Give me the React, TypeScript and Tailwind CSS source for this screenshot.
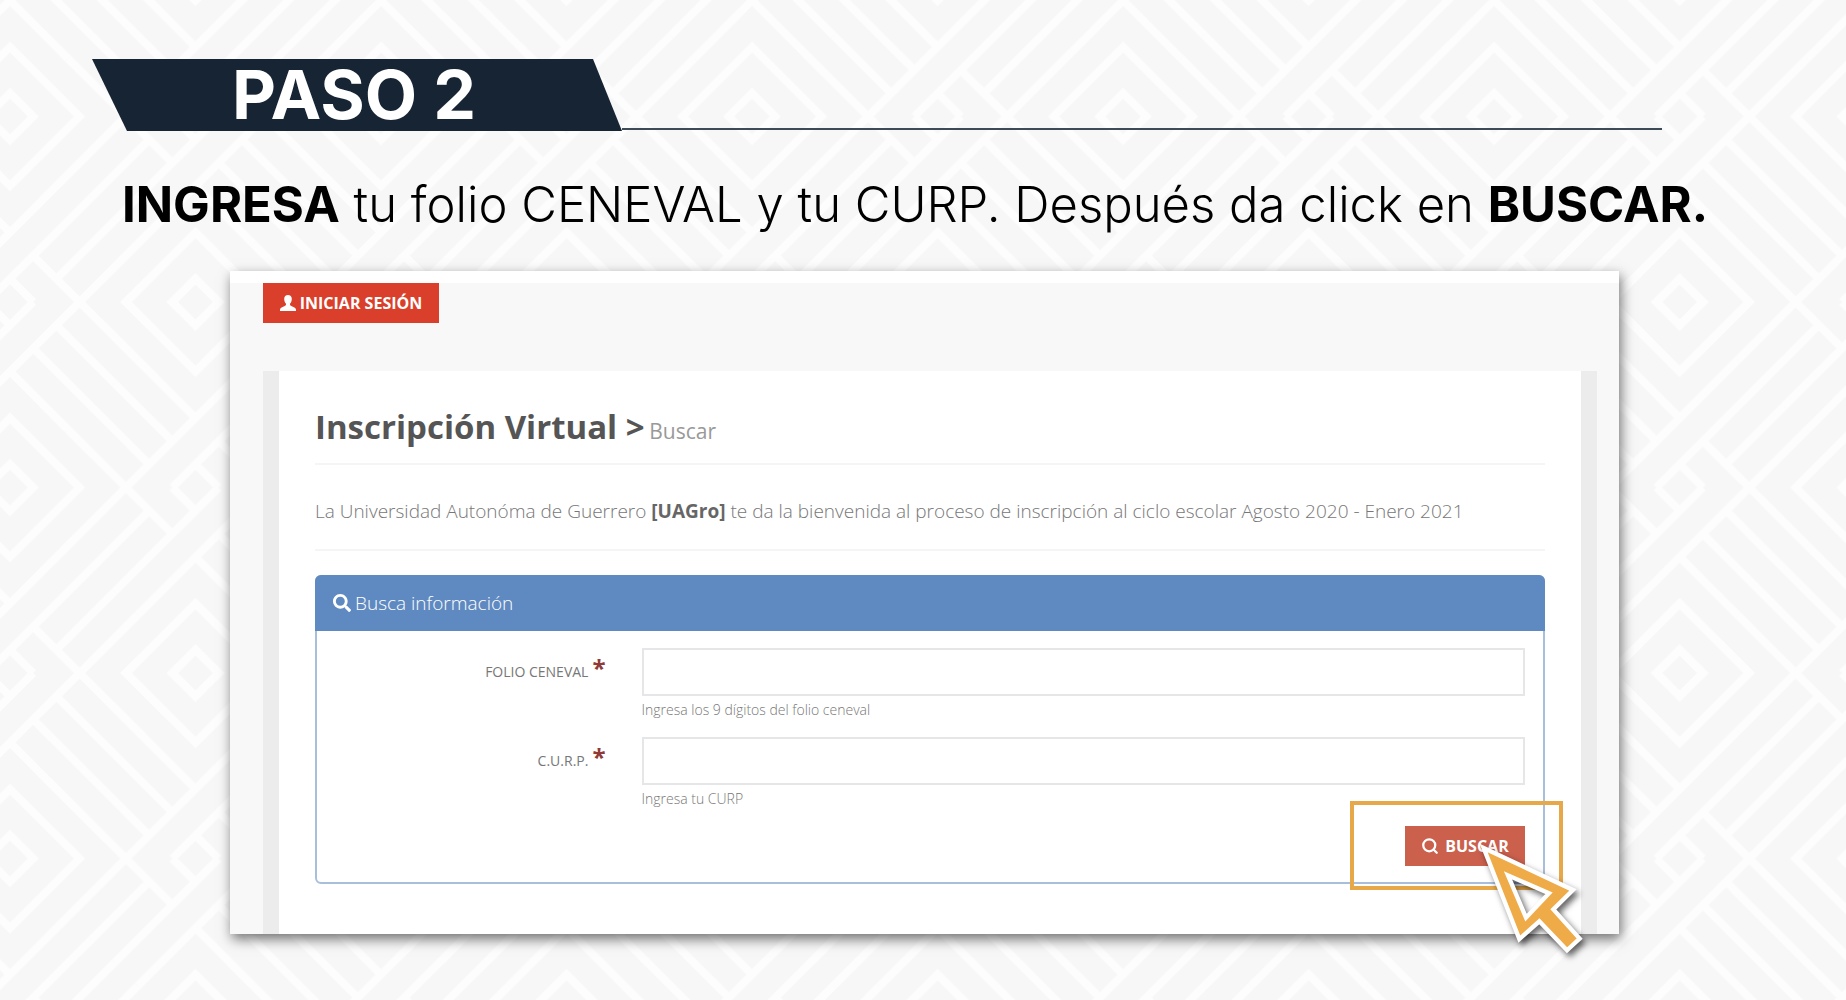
import { useState } from "react";
import { Search } from "lucide-react";
import { FaSearch } from "react-icons/fa";

type FieldProps = {
  id: string;
  label: string;
  hint: string;
  value: string;
  onChange: (value: string) => void;
};

// Woven diamonds, drawn in units of 1/16 tile around the centre of one small diamond.
const WEAVE =
  "M-5.5 2.5L2.5-5.5M-2.5 5.5L5.5-2.5M-2.5-5.5L0-3M1-2L5.5 2.5M-5.5-2.5L-1 2M0 3L2.5 5.5" +
  "M-3.5-4.5L-1-2M2 1L4.5 3.5M0-1L1 0M-4.5-3.5L-2-1M1 2L3.5 4.5M-1 0L0 1" +
  "M-4.5 3.5L-2 1M-1 0L3.5-4.5M-3.5 4.5L1 0M2-1L4.5-3.5" +
  "M8-1L9 0L8 1L7 0ZM8-3L11 0L8 3L5 0Z" +
  "M-8-1L-7 0L-8 1L-9 0ZM-8-3L-5 0L-8 3L-11 0Z";

function Backdrop() {
  return (
    <svg className="absolute inset-0 -z-10 h-full w-full" aria-hidden="true">
      <defs>
        <g id="knot">
          <path d={WEAVE} fill="none" stroke="#fdfdfd" strokeWidth="0.34" />
        </g>
        <pattern
          id="weave"
          width="16"
          height="16"
          patternUnits="userSpaceOnUse"
          patternTransform="translate(10 302) scale(23.19)"
        >
          <use href="#knot" x="8" y="8" />
          <use href="#knot" x="0" y="0" />
          <use href="#knot" x="16" y="0" />
          <use href="#knot" x="0" y="16" />
          <use href="#knot" x="16" y="16" />
        </pattern>
      </defs>
      <rect width="100%" height="100%" fill="#f7f7f7" />
      <rect width="100%" height="100%" fill="url(#weave)" />
    </svg>
  );
}

function UserIcon() {
  return (
    <svg viewBox="0 0 16 16" className="h-4 w-4" fill="currentColor" aria-hidden="true">
      <path d="M8 0C5.700 0 4.200 1.600 4.200 4c0 1.800.6 3.500 1.700 4.600.3.900.1 1.700-.7 2.200L1.600 12.400C.5 12.900 0 13.700 0 14.800V16h16v-1.200c0-1.100-.5-1.900-1.600-2.400l-3.600-1.600c-.8-.5-1-1.300-.7-2.200C11.200 7.500 11.800 5.800 11.800 4 11.800 1.600 10.300 0 8 0z" />
    </svg>
  );
}

function Pointer() {
  return (
    <svg
      viewBox="540 250 330 351"
      className="pointer-events-none absolute top-4 left-[74px] h-[117px] w-[110px] overflow-visible drop-shadow-[3px_4px_3px_rgba(0,0,0,0.6)]"
      aria-hidden="true"
    >
      <path
        d="M554 268L822 394L763 452L842 540L804 575L721 488L661 541ZM627 350L681 477L750 404Z"
        fill="#efab48"
        fillRule="evenodd"
        stroke="#fff"
        strokeWidth="13"
      />
    </svg>
  );
}

function Field({ id, label, hint, value, onChange }: FieldProps) {
  return (
    <div className="grid grid-cols-4">
      <label htmlFor={id} className="flex items-start justify-end gap-1 pt-2 pr-[18px]">
        <span className="pt-1 text-sm leading-6 text-[#777]">{label}</span>
        <span className="text-2xl leading-6 font-bold text-[#8f3a36]">*</span>
      </label>
      <div className="col-span-3 px-[18px]">
        <input
          id={id}
          type="text"
          value={value}
          onChange={(e) => onChange(e.target.value)}
          className="block h-12 w-full border-2 border-[#e4e6e8] bg-white px-3 text-base text-[#555] outline-none"
        />
        <p className="mt-1 text-sm leading-5 font-light text-[#777]">{hint}</p>
      </div>
    </div>
  );
}

export default function App() {
  const [folio, setFolio] = useState("");
  const [curp, setCurp] = useState("");

  return (
    <main className="relative isolate min-h-screen overflow-hidden pb-16 font-['Open_Sans',sans-serif]">
      <Backdrop />

      <header className="flex items-end pt-[59px] pr-[184px] pl-[92px]">
        <h1 className="h-[72px] w-[530px] shrink-0 bg-[#172434] pl-[140px] font-['Inter',sans-serif] text-[68px] leading-[70px] font-bold text-white [clip-path:polygon(0_0,501px_0,100%_100%,35px_100%)]">
          PASO 2
        </h1>
        <div className="mb-px h-0.5 flex-1 bg-[#3d4a57]" />
      </header>

      <p className="mt-11 pl-[122px] font-['Inter',sans-serif] text-[49px] leading-[60px] font-light whitespace-nowrap text-black">
        <strong className="font-bold">INGRESA</strong> tu folio CENEVAL y tu CURP. Después da click en{" "}
        <strong className="font-bold">BUSCAR.</strong>
      </p>

      <section className="mt-9 mr-[227px] ml-[230px] border-t-[12px] border-white bg-[#f8f8f8] shadow-[2px_5px_12px_rgba(0,0,0,0.55)]">
        <div className="px-[33px]">
          <button
            type="button"
            className="flex h-10 w-44 items-center justify-center gap-1 bg-[#d93f2b] text-base font-bold text-white"
          >
            <UserIcon />
            INICIAR SESIÓN
          </button>
        </div>

        <div className="mt-12 mr-[22px] ml-[33px] border-x-[16px] border-[#ececec] bg-white px-9 pt-9 pb-[50px]">
          <h2 className="border-b-2 border-[#f5f5f5] pb-3 text-[33px] leading-10 font-bold text-[#555]">
            Inscripción Virtual &gt;{" "}
            <small className="-ml-1 text-[21px] font-normal text-[#999]">Buscar</small>
          </h2>
          <p className="mt-8 border-b-2 border-[#f5f5f5] pb-6 text-[19px] leading-7 font-light text-[#777]">
            La Universidad Autonóma de Guerrero <strong className="font-bold text-[#666]">[UAGro]</strong> te da la
            bienvenida al proceso de inscripción al ciclo escolar Agosto 2020 - Enero 2021
          </p>

          <form
            className="mt-6 rounded-md border-2 border-[#a9bedb] bg-white"
            onSubmit={(e) => e.preventDefault()}
          >
            <h3 className="-mx-0.5 -mt-0.5 flex h-14 items-center gap-1 rounded-t-md bg-[#5f8ac1] pl-[18px] text-[19px] font-light text-white">
              <FaSearch className="h-[18px] w-[18px]" />
              Busca información
            </h3>
            <div className="flex flex-col gap-[17px] pt-[17px] pb-4">
              <Field
                id="folio"
                label="FOLIO CENEVAL"
                hint="Ingresa los 9 dígitos del folio ceneval"
                value={folio}
                onChange={setFolio}
              />
              <Field id="curp" label="C.U.R.P." hint="Ingresa tu CURP" value={curp} onChange={setCurp} />
              <div className="flex justify-end pr-[18px]">
                <div className="relative">
                  <button
                    type="submit"
                    className="flex h-10 w-[120px] items-center justify-center gap-1.5 bg-[#cb604d] text-base font-bold text-white"
                  >
                    <Search className="h-[18px] w-[18px]" strokeWidth={3} />
                    BUSCAR
                  </button>
                  <div className="pointer-events-none absolute -top-[25px] -right-[38px] -bottom-6 -left-[55px] border-4 border-[#e7a849]" />
                  <Pointer />
                </div>
              </div>
            </div>
          </form>
        </div>
      </section>
    </main>
  );
}
